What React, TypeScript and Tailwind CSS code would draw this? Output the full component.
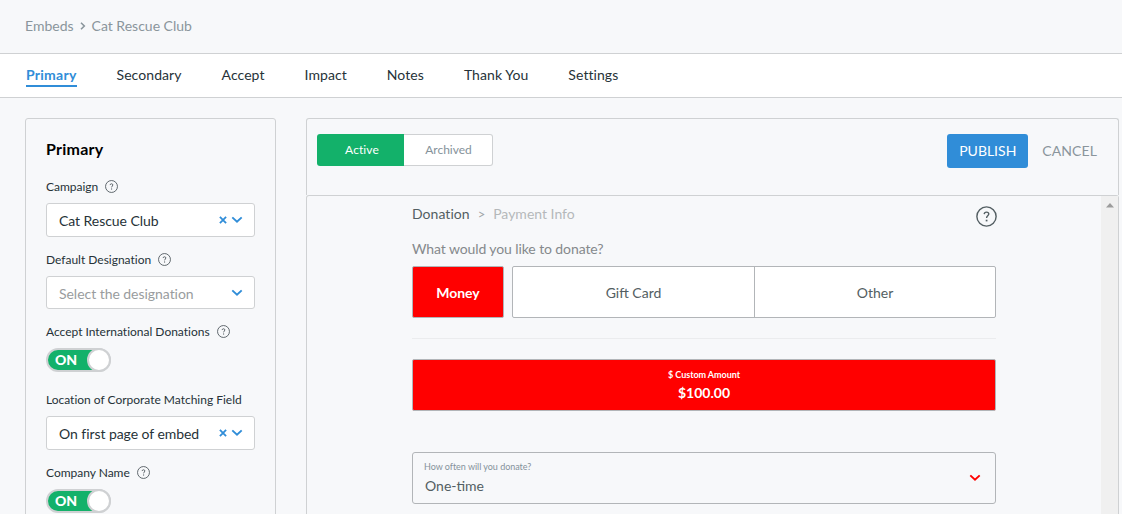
import React from 'react';
import clsx from 'clsx';

const tabs = ['Primary', 'Secondary', 'Accept', 'Impact', 'Notes', 'Thank You', 'Settings'];

function HelpIcon({ className }: { className?: string }) {
  return (
    <svg viewBox="0 0 24 24" className={clsx('shrink-0', className)} fill="none" stroke="currentColor" aria-hidden="true">
      <circle cx="12" cy="12" r="11" strokeWidth="1.6" />
      <path d="M9.4 9.3c.1-1.5 1.1-2.3 2.6-2.3s2.6.9 2.6 2.2c0 1.9-2.5 2.2-2.5 4.4" strokeWidth="1.6" />
      <path d="M12.1 15.7v1.9" strokeWidth="2" />
    </svg>
  );
}

function Chevron({ className }: { className?: string }) {
  return (
    <svg viewBox="0 0 12 8" className={clsx('shrink-0', className)} fill="none" stroke="currentColor" aria-hidden="true">
      <path d="M1.3 1.4 6 5.8l4.7-4.4" strokeWidth="1.9" />
    </svg>
  );
}

interface LabelProps {
  text: string;
  help?: boolean;
  className?: string;
}

function Label({ text, help = true, className }: LabelProps) {
  return (
    <div className={clsx('flex h-5 items-center whitespace-nowrap text-[12px] text-[#263238]', className)}>
      <span className="tracking-[-0.01px]">{text}</span>
      {help && <HelpIcon className="mb-px ml-[7px] size-[13px] text-[#4a5459]" />}
    </div>
  );
}

interface SelectProps {
  value: string;
  placeholder?: boolean;
  className?: string;
}

function Select({ value, placeholder = false, className }: SelectProps) {
  return (
    <div className={clsx('mt-1.5 flex items-center rounded-[3px] border border-[#cfd1d3] bg-white pr-[11px] pl-3 text-[14px]', className)}>
      <span
        className={clsx(
          'flex-1 whitespace-nowrap',
          placeholder ? 'pt-0.5 tracking-[-0.04px] text-[#999c9e]' : 'pt-px tracking-[-0.06px] text-[#263238]'
        )}
      >
        {value}
      </span>
      {!placeholder && (
        <svg viewBox="0 0 8 8" className="mr-1 size-2 shrink-0 text-[#308dd8]" fill="none" stroke="currentColor" aria-hidden="true">
          <path d="M.9.9l6.2 6.2M7.1.9.9 7.1" strokeWidth="1.8" />
        </svg>
      )}
      <Chevron className="h-2 w-3 text-[#308dd8]" />
    </div>
  );
}

function Toggle() {
  return (
    <div className="mt-1.5 flex h-6 w-[65px] items-center justify-between rounded-full border-2 border-[#cfd1d3] bg-[#13b16a] pl-[7px]">
      <span className="text-[14px] leading-none font-black tracking-[-0.2px] text-white">ON</span>
      <span className="-mr-0.5 size-6 rounded-full border-2 border-[#cfd1d3] bg-white" />
    </div>
  );
}

function Sidebar() {
  return (
    <aside className="h-[420px] w-[251px] shrink-0 rounded-[3px] border border-[#cfd1d3] px-5 pt-[19px]">
      <h2 className="h-[21px] text-[16px] leading-[21px] font-bold tracking-[0.25px] text-black">Primary</h2>
      <Label text="Campaign" className="mt-[18px]" />
      <Select value="Cat Rescue Club" className="h-[34px]" />
      <Label text="Default Designation" className="mt-[13px]" />
      <Select value="Select the designation" placeholder className="h-[33px]" />
      <Label text="Accept International Donations" className="mt-[13px]" />
      <Toggle />
      <Label text="Location of Corporate Matching Field" help={false} className="mt-[18px]" />
      <Select value="On first page of embed" className="h-[34px]" />
      <Label text="Company Name" className="mt-[13px]" />
      <Toggle />
    </aside>
  );
}

function DonationForm() {
  return (
    <div className="ml-[105px] w-[584px] text-[14px] text-[#535e62]">
      <div className="flex h-9 items-start justify-between pt-2">
        <div className="flex items-center leading-5">
          <span className="tracking-[0.04px] text-[#535e62]">Donation</span>
          <span className="ml-2 text-[13px] text-[#a0a5a8]">&gt;</span>
          <span className="ml-2 text-[#b5b8ba]">Payment Info</span>
        </div>
        <HelpIcon className="mt-0.5 -mr-px size-[21px] text-[#535e62]" />
      </div>
      <p className="mt-[7px] h-5 leading-5 tracking-[-0.1px] text-[#85898c]">What would you like to donate?</p>
      <div className="mt-[7px] flex h-[52px] gap-2">
        <button className="w-[92px] rounded-[2px] border border-[#b2b5b8] bg-[#ff0000] font-bold tracking-[-0.05px] text-white">Money</button>
        <div className="flex flex-1 rounded-[2px] border border-[#b2b5b8] bg-white">
          <button className="w-[242px] border-r border-[#b2b5b8]">Gift Card</button>
          <button className="flex-1">Other</button>
        </div>
      </div>
      <hr className="mt-5 border-[#ebecee]" />
      <div className="mt-5 flex h-[52px] flex-col items-center rounded-[2px] border border-[#b2b5b8] bg-[#ff0000] pt-2 text-white">
        <span className="text-[9px] leading-[14px] font-bold tracking-[-0.05px]">$ Custom Amount</span>
        <span className="mt-px text-[14px] leading-5 font-bold">$100.00</span>
      </div>
      <div className="mt-[41px] flex h-[52px] items-center justify-between rounded-[3px] border border-[#b2b5b8] pr-[14px] pl-[11px]">
        <div className="flex flex-col">
          <span className="text-[9px] leading-[14px] tracking-[-0.03px] text-[#85929a]">How often will you donate?</span>
          <span className="mt-0.5 ml-px text-[14px] leading-5">One-time</span>
        </div>
        <Chevron className="h-2 w-3 text-[#ff0000]" />
      </div>
    </div>
  );
}

function Preview() {
  return (
    <section className="flex h-[420px] w-[813px] shrink-0 flex-col">
      <div className="flex h-[77px] items-start justify-between rounded-t-[3px] border border-b-0 border-[#cfd1d3] pt-[15px] pr-[21px] pl-2.5">
        <div className="flex h-8 text-[12px]">
          <button className="w-[87px] rounded-l-[3px] bg-[#13b16a] pl-[3px] tracking-[0.1px] text-white">Active</button>
          <button className="w-[89px] rounded-r-[3px] border border-l-0 border-[#cfd1d3] bg-white pl-px text-[#85929a]">Archived</button>
        </div>
        <div className="flex text-[14px]">
          <button className="h-[34px] w-[81px] rounded-[3px] bg-[#308dd8] pb-0.5 text-white">PUBLISH</button>
          <button className="ml-3.5 pb-0.5 tracking-[0.1px] text-[#8a959c]">CANCEL</button>
        </div>
      </div>
      <div className="flex flex-1 justify-between rounded-t-[3px] border border-b-0 border-[#cfd1d3]">
        <DonationForm />
        <div className="flex w-[17px] justify-center bg-[#f0f0f0] pt-[7px]">
          <svg viewBox="0 0 8 5" className="h-[5px] w-2" fill="#9c9c9c" aria-hidden="true">
            <path d="M4 0l4 4.5H0z" />
          </svg>
        </div>
      </div>
    </section>
  );
}

export default function App() {
  return (
    <div className="h-[514px] w-[1122px] overflow-hidden bg-[#f7f8fa] font-['Lato','Liberation_Sans',sans-serif]">
      <header className="flex h-[53px] items-center pb-0.5 pl-[25px] text-[14px] text-[#8a959c]">
        <span>Embeds</span>
        <svg viewBox="0 0 6 8" className="mr-1.5 ml-1.5 h-2 w-1.5" fill="none" stroke="currentColor" aria-hidden="true">
          <path d="M1 .8 4.3 4 1 7.2" strokeWidth="1.6" />
        </svg>
        <span>Cat Rescue Club</span>
      </header>
      <nav className="flex h-[45px] items-start gap-10 border-y border-[#cfd1d3] bg-white pt-[11px] pl-[26px] text-[14px] leading-5 tracking-[0.07px] text-[#263238]">
        {tabs.map((tab) => (
          <a
            key={tab}
            className={clsx(
              'whitespace-nowrap',
              tab === 'Primary' && 'h-[22px] border-b-2 border-[#308dd8] font-bold tracking-[0.25px] text-[#308dd8]'
            )}
          >
            {tab}
          </a>
        ))}
      </nav>
      <main className="flex gap-[30px] pt-5 pl-[25px]">
        <Sidebar />
        <Preview />
      </main>
    </div>
  );
}
